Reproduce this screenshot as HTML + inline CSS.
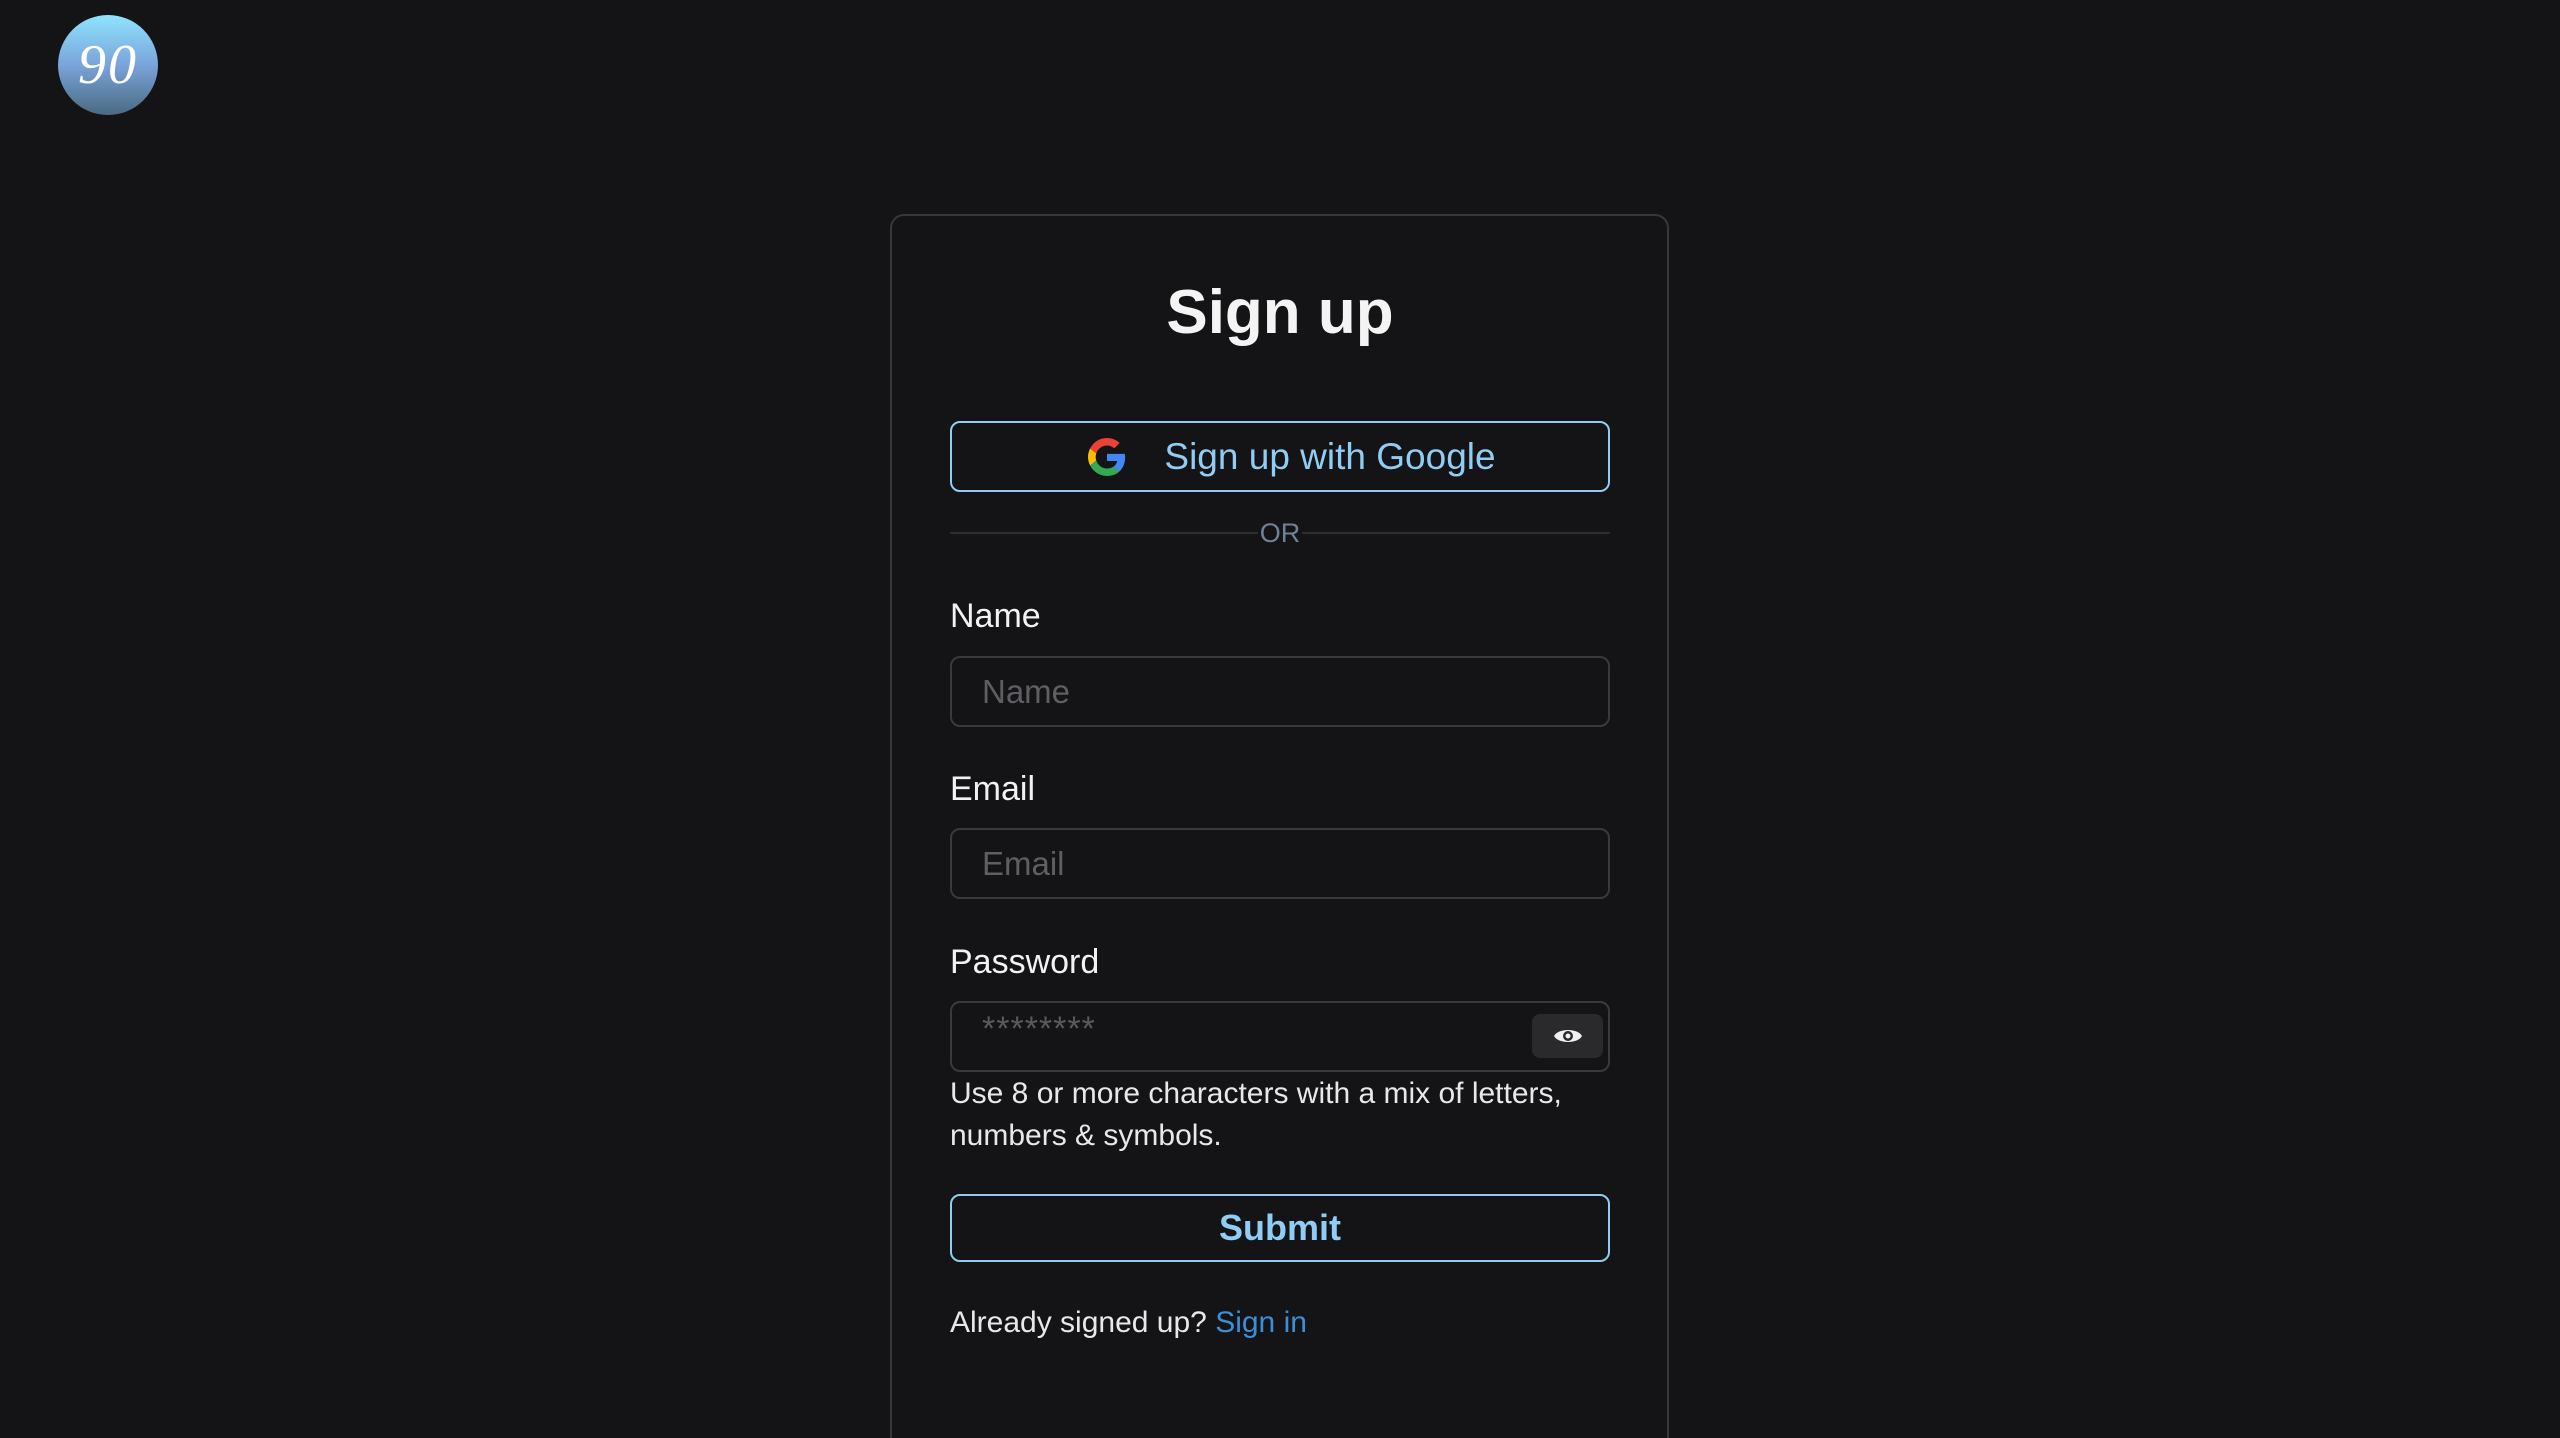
<!DOCTYPE html>
<html style="overflow:hidden;height:1438px"><head><style>
*{box-sizing:border-box;margin:0;padding:0}
body{width:2560px;height:1438px;background:#141316;font-family:"Liberation Sans",sans-serif;color:#f2f2f2;position:relative;overflow:hidden}
.logo{position:absolute;left:58px;top:15px;width:100px;height:100px;border-radius:50%;background:linear-gradient(#8fe3ff,#7aa4da 50%,#4a6a82);color:#fff;font:italic 56px "Liberation Serif",serif;text-align:center;line-height:100px;letter-spacing:2px}
.card{position:absolute;left:890px;top:214px;width:779px;height:1240px;border:2px solid #38373b;border-radius:14px}
.abs{position:absolute}
h1{position:absolute;left:0;width:100%;top:277px;text-align:center;font-size:62px;font-weight:bold;color:#f4f4f4}
.btn{position:absolute;left:950px;width:660px;border:2.5px solid #90cdf4;border-radius:10px;color:#90cdf4;font-size:37px;display:flex;align-items:center;justify-content:center}
.label{position:absolute;left:950px;font-size:34px;color:#f2f2f2}
.inp{position:absolute;left:950px;width:660px;height:71px;border:2px solid #3a393d;border-radius:10px;font-size:33px;color:#5f5f63;padding-left:30px;line-height:67px}
</style></head><body>
<div class="logo">90</div>
<div class="card"></div>
<h1>Sign up</h1>
<div class="btn" style="top:421px;height:71px;padding-left:24px">
<svg width="38" height="38" viewBox="0 0 48 48" style="margin-right:38px"><path fill="#EA4335" d="M24 9.5c3.5 0 6.6 1.2 9.1 3.6l6.8-6.8C35.8 2.4 30.3 0 24 0 14.6 0 6.6 5.4 2.7 13.2l7.9 6.2C12.5 13.6 17.8 9.5 24 9.5z"/><path fill="#4285F4" d="M46.9 24.5c0-1.6-.1-3.1-.4-4.5H24v9h12.9c-.6 3-2.3 5.5-4.8 7.2l7.7 6c4.5-4.2 7.1-10.3 7.1-17.7z"/><path fill="#FBBC05" d="M10.5 28.6c-.5-1.4-.8-3-.8-4.6s.3-3.2.8-4.6l-7.9-6.2C1 16.5 0 20.1 0 24s1 7.5 2.7 10.8l7.8-6.2z"/><path fill="#34A853" d="M24 48c6.5 0 11.9-2.1 15.9-5.8l-7.7-6c-2.2 1.5-5 2.3-8.2 2.3-6.2 0-11.5-4.2-13.4-9.8l-7.9 6.1C6.6 42.6 14.6 48 24 48z"/></svg>
Sign up with Google</div>
<div class="abs" style="left:950px;top:532px;width:660px;height:2px;background:#2e2d31"></div>
<div class="abs" style="left:1258px;top:518px;width:44px;height:34px;background:#141316;color:#718096;font-size:27px;text-align:center">OR</div>
<div class="label" style="top:597px">Name</div>
<div class="inp" style="top:656px">Name</div>
<div class="label" style="top:770px">Email</div>
<div class="inp" style="top:828px">Email</div>
<div class="label" style="top:943px">Password</div>
<div class="inp" style="top:1001px;font-size:34px;line-height:52px;color:#5a5a5e;letter-spacing:1px">********</div>
<div class="abs" style="left:1532px;top:1014px;width:71px;height:44px;background:#2a2a2d;border-radius:8px;display:flex;align-items:center;justify-content:center">
<svg width="30" height="22" viewBox="0 0 30 22"><path d="M1 11C5 3 25 3 29 11C25 19 5 19 1 11Z" fill="#f0f0f0"/><circle cx="15" cy="11" r="5" fill="#2a2a2d"/><circle cx="15" cy="11" r="2.5" fill="#f0f0f0"/></svg></div>
<div class="abs" style="left:950px;top:1073px;font-size:30px;line-height:42px;color:#e8e8e8;width:680px">Use 8 or more characters with a mix of letters,<br>numbers &amp; symbols.</div>
<div class="btn" style="top:1194px;height:68px;font-weight:bold;font-size:36px">Submit</div>
<div class="abs" style="left:950px;top:1306px;font-size:30px;color:#e8e8e8">Already signed up? <span style="color:#3b8fd6">Sign in</span></div>
</body></html>
